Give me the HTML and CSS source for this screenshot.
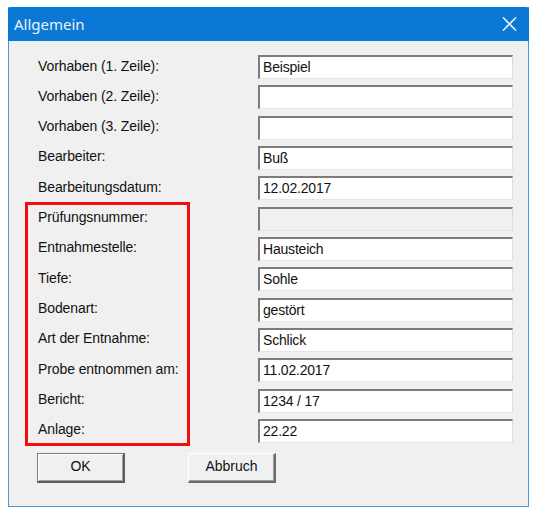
FILE: index.html
```html
<!DOCTYPE html>
<html lang="de">
<head>
<meta charset="utf-8">
<title>Allgemein</title>
<link rel="stylesheet" href="styles.css">
</head>
<body>
<div class="window">
  <div class="titlebar">
    <span class="title">Allgemein</span>
    <svg class="close" width="15" height="14" viewBox="0 0 15 14" aria-hidden="true">
      <path d="M1 0.5 L14 13.5 M14 0.5 L1 13.5" stroke="#e6f1fb" stroke-width="1.6" fill="none"/>
    </svg>
  </div>
  <div class="content">
    <div class="form">
      <label class="lbl">Vorhaben (1. Zeile):</label><div class="field">Beispiel</div>
      <label class="lbl">Vorhaben (2. Zeile):</label><div class="field"></div>
      <label class="lbl">Vorhaben (3. Zeile):</label><div class="field"></div>
      <label class="lbl">Bearbeiter:</label><div class="field">Buß</div>
      <label class="lbl">Bearbeitungsdatum:</label><div class="field">12.02.2017</div>
      <label class="lbl">Prüfungsnummer:</label><div class="field disabled"></div>
      <label class="lbl">Entnahmestelle:</label><div class="field">Hausteich</div>
      <label class="lbl">Tiefe:</label><div class="field">Sohle</div>
      <label class="lbl">Bodenart:</label><div class="field">gestört</div>
      <label class="lbl">Art der Entnahme:</label><div class="field">Schlick</div>
      <label class="lbl">Probe entnommen am:</label><div class="field">11.02.2017</div>
      <label class="lbl">Bericht:</label><div class="field">1234 / 17</div>
      <label class="lbl">Anlage:</label><div class="field">22.22</div>
    </div>
    <div class="buttons">
      <button class="btn default">OK</button>
      <button class="btn">Abbruch</button>
    </div>
    <div class="highlight"></div>
  </div>
</div>
</body>
</html>
```

FILE: styles.css
```css
html, body {
  margin: 0;
  padding: 0;
  background: #ffffff;
}
body {
  padding: 7px 0 0 8px;
  font-family: "Liberation Sans", Arial, sans-serif;
}
.window {
  box-sizing: border-box;
  width: 521px;
  height: 500px;
  border: 1px solid #4a98dc;
  border-top: none;
  background: #f0f0f0;
  display: flex;
  flex-direction: column;
}
.titlebar {
  height: 34px;
  margin: 0 -1px;
  background: #0a78d4;
  border-radius: 3px 3px 0 0;
  display: flex;
  align-items: center;
  justify-content: space-between;
  padding: 0 12px 0 6px;
  box-sizing: border-box;
}
.title {
  font-family: "Noto Sans", "Open Sans", sans-serif;
  font-size: 15px;
  color: #e9f3fc;
  padding-bottom: 1px;
}
.close {
  display: block;
}
.content {
  position: relative;
  flex: 1;
  padding: 14px 15px 0 29px;
}
.form {
  display: grid;
  grid-template-columns: 220px 255px;
  grid-auto-rows: 24px;
  row-gap: 6.33px;
}
.lbl {
  font-size: 14px;
  color: #111;
  align-self: center;
  padding-bottom: 3px;
  letter-spacing: -0.1px;
}
.field {
  box-sizing: border-box;
  height: 24px;
  background: #ffffff;
  border-top: 2px solid #7c7c7c;
  border-left: 2px solid #7c7c7c;
  border-bottom: 1px solid #e6e6e6;
  border-right: 1px solid #dcdcdc;
  font-size: 14px;
  color: #111;
  padding: 0 0 0 3px;
  line-height: 20px;
  letter-spacing: -0.2px;
}
.field.disabled {
  background: #f0f0f0;
}
.buttons {
  display: flex;
  gap: 63px;
  margin: 10px 0 0 -1px;
}
.btn {
  box-sizing: border-box;
  width: 88px;
  height: 30px;
  margin: 0;
  padding: 0 0 2px 0;
  font-family: "Liberation Sans", Arial, sans-serif;
  font-size: 14px;
  color: #111;
  background: #f0f0f0;
  border-top: 1px solid #ffffff;
  border-left: 1px solid #ffffff;
  border-right: 2px solid #6b6b6b;
  border-bottom: 2px solid #6b6b6b;
  box-shadow: inset -1px -1px 0 #a0a0a0;
}
.btn.default {
  border: 1px solid #7a7a7a;
  border-right: 2px solid #5c5c5c;
  border-bottom: 2px solid #5c5c5c;
  box-shadow: inset 1px 1px 0 #ffffff, inset -1px -1px 0 #a0a0a0;
}
.highlight {
  position: absolute;
  left: 16px;
  top: 161px;
  width: 165px;
  height: 244px;
  box-sizing: border-box;
  border: 3px solid #f20d0d;
  pointer-events: none;
}
```
